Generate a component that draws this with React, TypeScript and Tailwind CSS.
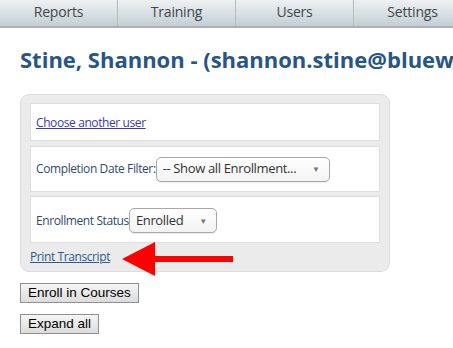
const tabs = ["Reports", "Training", "Users", "Settings"]

const FakeSelect = ({ label, width }: { label: string; width: string }) => {
  return (
    <div
      className={`flex items-center justify-between h-[25px] ${width} shrink-0 rounded-[5px] border border-[#a8a8a8] bg-gradient-to-b from-white to-[#f3f3f3] pl-[6px] pr-[9px] text-[13px] tracking-[-0.35px] text-[#333] shadow-[0_1px_1px_rgba(0,0,0,0.08)]`}
    >
      <span className="whitespace-nowrap">{label}</span>
      <span className="text-[8px] text-[#777]">▼</span>
    </div>
  )
}

export default function App() {
  return (
    <div
      className="relative w-[453px] h-[348px] overflow-hidden bg-white"
      style={{ fontFamily: '"Open Sans", "Noto Sans", sans-serif' }}
    >
      {/* top nav */}
      <div className="flex h-[28px] border-b-2 border-[#a9b1b6] bg-gradient-to-b from-[#eef1f3] to-[#c6ced3]">
        {tabs.map((t) => (
          <div
            key={t}
            className="flex w-[118px] shrink-0 items-center justify-center border-r border-[#b3bbc0] pb-[3px] text-[14px] tracking-[-0.2px] text-[#3e474d]"
          >
            {t}
          </div>
        ))}
      </div>

      <h1 className="ml-5 mt-[16px] whitespace-nowrap text-[22px] font-bold leading-[30px] text-[#275585]">
        Stine, Shannon - (shannon.stine@bluewaterlearning.com)
      </h1>

      <div className="ml-5 mt-[20px] w-[370px] rounded-[9px] border border-[#dcdcdc] bg-[#ebebeb] px-[9px] pt-[8px] text-[12px] tracking-[-0.4px]">
        <div className="flex h-[38px] items-center border border-[#dedede] bg-white px-[5px] pt-[2px]">
          <a className="text-[#3c3ca0] underline">Choose another user</a>
        </div>
        <div className="mt-[5px] flex h-[46px] items-center border border-[#dedede] bg-white px-[5px]">
          <span className="text-[#2f4b68] whitespace-nowrap">Completion Date Filter:</span>
          <FakeSelect label="-- Show all Enrollment..." width="w-[174px]" />
        </div>
        <div className="mt-[4px] flex h-[47px] items-center border border-[#dedede] bg-white px-[5px] pt-[2px]">
          <span className="text-[#2f4b68] whitespace-nowrap">Enrollment Status</span>
          <FakeSelect label="Enrolled" width="w-[88px]" />
        </div>
        <div className="flex h-[28px] items-center">
          <a className="text-[#2b5a8c] underline">Print Transcript</a>
        </div>
      </div>

      <div className="ml-5 mt-[11px] flex flex-col items-start gap-[11px]" style={{ fontFamily: '"Liberation Sans", Arial, sans-serif' }}>
        <button className="h-[20px] border border-[#8f8f8f] bg-gradient-to-b from-[#f6f6f6] to-[#dcdcdc] px-[7px] text-[13.5px] leading-none text-black">
          Enroll in Courses
        </button>
        <button className="h-[20px] border border-[#8f8f8f] bg-gradient-to-b from-[#f6f6f6] to-[#dcdcdc] px-[7px] text-[13.5px] leading-none text-black">
          Expand all
        </button>
      </div>

      {/* red annotation arrow */}
      <svg className="absolute left-[122px] top-[242px]" width="111" height="34" viewBox="0 0 111 34">
        <polygon points="0,17 33,0 33,34" fill="#ff0000" />
        <rect x="32" y="14" width="79" height="6" fill="#ff0000" />
      </svg>
    </div>
  )
}
